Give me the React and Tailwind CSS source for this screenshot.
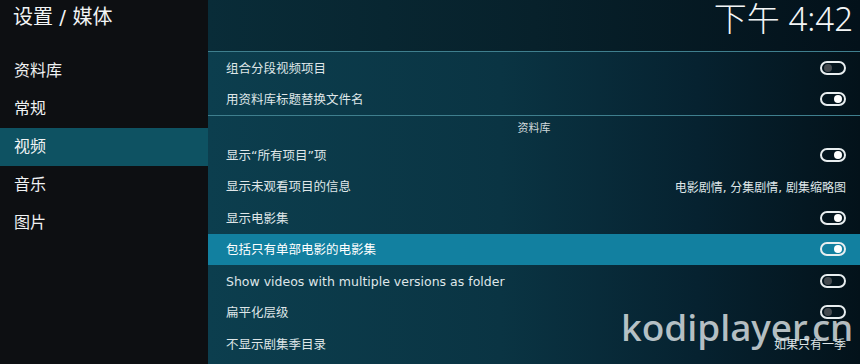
import React from 'react';

const font = { fontFamily: '"DejaVu Sans", "Noto Sans CJK SC", sans-serif' };

const Toggle = ({ on }) => (
  <div className="relative h-[14px] w-[26px] rounded-full border-2 border-[#e8eef0]">
    <div
      className={
        on
          ? 'absolute right-[2px] top-[1px] h-[8px] w-[8px] rounded-full bg-white'
          : 'absolute left-[2px] top-[1px] h-[8px] w-[8px] rounded-full bg-[#454b50]'
      }
    />
  </div>
);

const Row = ({ label, on, value, active }) => (
  <div
    className={
      'flex h-[31.5px] items-center justify-between pl-[18px] pr-[14px] text-[12.5px] ' +
      (active ? 'bg-[#1280a0] text-white' : 'text-[#dfe6e8]')
    }
  >
    <span className="pt-[3px]">{label}</span>
    {value ? (
      <span className="pt-[3px] text-[12px] text-[#dfe6e8]">{value}</span>
    ) : (
      <Toggle on={on} />
    )}
  </div>
);

const sideItems = ['资料库', '常规', '视频', '音乐', '图片'];

export default function App() {
  return (
    <div
      className="relative flex h-[364px] w-[860px] overflow-hidden bg-[#05161d]"
      style={font}
    >
      <div className="flex w-[208px] flex-col bg-[#0d0f12]">
        <div className="h-[52px] pl-[13px] pt-[2px] text-[20px] text-[#f2f4f5]">设置 / 媒体</div>
        {sideItems.map((s) => (
          <div
            key={s}
            className={
              'flex h-[38px] items-center pl-[14px] text-[16px] text-[#f0f2f3] ' +
              (s === '视频' ? 'bg-[#0e5262]' : '')
            }
          >
            {s}
          </div>
        ))}
      </div>
      <div className="flex flex-1 flex-col bg-[linear-gradient(90deg,#0c3e4e_0%,#0a3443_45%,#062230_75%,#03121a_100%)]">
        <div className="flex h-[51px] items-start justify-end bg-[linear-gradient(90deg,#092c38_0%,#07212b_50%,#03111a_100%)] pr-[7px]">
          <span
            className="text-[33px] font-light leading-[38px] text-[#f4f6f7]"
            style={{ fontFamily: '"Noto Sans", "Noto Sans CJK SC", sans-serif' }}
          >
            下午 4:42
          </span>
        </div>
        <div className="h-px bg-[#3f7f8e]" />
        <Row label="组合分段视频项目" on={false} />
        <Row label="用资料库标题替换文件名" on />
        <div className="h-px bg-[#3f7f8e]" />
        <div className="flex h-[23px] items-center justify-center pt-[3px] text-[11px] text-[#cfd8db]">资料库</div>
        <Row label="显示“所有项目”项" on />
        <Row label="显示未观看项目的信息" value="电影剧情, 分集剧情, 剧集缩略图" />
        <Row label="显示电影集" on />
        <Row label="包括只有单部电影的电影集" on active />
        <Row label="Show videos with multiple versions as folder" on={false} />
        <Row label="扁平化层级" on={false} />
        <Row label="不显示剧集季目录" value="如果只有一季" />
      </div>
      <div
        className="pointer-events-none absolute left-[621px] top-[302px] text-[37px] font-medium leading-[50px] text-[#e6ecee]/80"
        style={{ fontFamily: '"Noto Sans", sans-serif' }}
      >
        kodiplayer.cn
      </div>
    </div>
  );
}
